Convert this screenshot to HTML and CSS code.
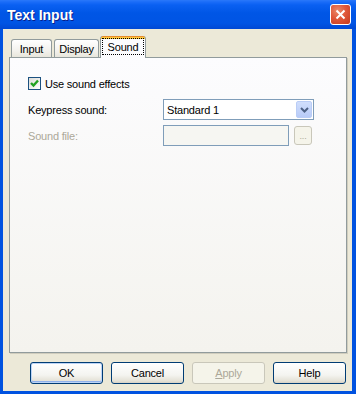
FILE: index.html
```html
<!DOCTYPE html>
<html lang="en">
<head>
  <meta charset="UTF-8">
  <title>Text Input</title>
  <link rel="stylesheet" href="styles.css">
</head>
<body>

<div class="window">
  <div class="titlebar">
    <span class="title">Text Input</span>
    <div class="close-btn">
      <svg width="11" height="11" viewBox="0 0 11 11"><path d="M1.5 1.5 L9.5 9.5 M9.5 1.5 L1.5 9.5" stroke="#fff" stroke-width="2" fill="none"/></svg>
    </div>
  </div>

  <div class="client">
    <div class="tabs">
      <div class="tab tab-input">Input</div>
      <div class="tab tab-display">Display</div>
      <div class="tab tab-active"><span class="focus">Sound</span></div>
    </div>

    <div class="panel">
      <div class="check-row">
        <span class="checkbox">
          <svg width="11" height="11" viewBox="0 0 11 11"><path d="M2 5 L4.5 7.5 L9 2.5" stroke="#21a121" stroke-width="2.4" fill="none"/></svg>
        </span>
        <span>Use sound effects</span>
      </div>

      <div class="row">
        <span class="label">Keypress sound:</span>
        <div class="combo">
          <span class="combo-text">Standard 1</span>
          <span class="combo-btn">
            <svg width="9" height="6" viewBox="0 0 9 6"><path d="M1 1 L4.5 4.5 L8 1" stroke="#4d6185" stroke-width="2" fill="none"/></svg>
          </span>
        </div>
      </div>

      <div class="row row-disabled">
        <span class="label">Sound file:</span>
        <div class="field"></div>
        <div class="browse-btn">...</div>
      </div>
    </div>

    <div class="buttons">
      <div class="btn btn-default">OK</div>
      <div class="btn">Cancel</div>
      <div class="btn btn-disabled"><u>A</u>pply</div>
      <div class="btn">Help</div>
    </div>
  </div>
</div>

</body>
</html>
```

FILE: styles.css
```css
/* Global Styles */
body {
  margin: 0;
  font-family: 'Liberation Sans', Arial, sans-serif;
  font-size: 11px;
  letter-spacing: -0.2px;
  color: #000;
}

.window {
  width: 356px;
  height: 394px;
  display: flex;
  flex-direction: column;
  background: #0052e0;
}

/* Title bar */
.titlebar {
  height: 29px;
  flex: none;
  display: flex;
  align-items: center;
  justify-content: space-between;
  padding: 0 5px 0 7px;
  box-sizing: border-box;
  background: linear-gradient(#2a78fa 0, #1a6cf8 2px, #0a60f2 5px, #0056e6 45%, #0054e4 80%, #0048d4 100%);
}

.title {
  color: #fff;
  font-weight: bold;
  font-size: 14px;
  letter-spacing: 0;
  text-shadow: 1px 1px 0 #0a1e8a;
}

.close-btn {
  width: 21px;
  height: 21px;
  box-sizing: border-box;
  border: 1px solid #fff;
  border-radius: 3px;
  background: radial-gradient(circle at 35% 30%, #ea8a6a 0, #e0583a 45%, #c4381c 100%);
  display: flex;
  align-items: center;
  justify-content: center;
}

/* Client area */
.client {
  flex: 1;
  margin: 0 4px 3px 3px;
  background: #ece9d8;
  padding: 7px 5px 0 6px;
  display: flex;
  flex-direction: column;
}

/* Tabs */
.tabs {
  height: 21px;
  display: flex;
  align-items: flex-end;
  padding-left: 2px;
  flex: none;
}

.tab {
  height: 18px;
  box-sizing: border-box;
  border: 1px solid #919b9c;
  border-bottom: none;
  border-radius: 3px 3px 0 0;
  background: linear-gradient(#ffffff, #f3f2ee 60%, #e8e6dc);
  display: flex;
  align-items: center;
  justify-content: center;
  padding-top: 1px;
}

.tab-input {
  width: 41px;
  margin-right: 2px;
}

.tab-display {
  width: 45px;
  margin-right: 1px;
}

.tab-active {
  width: 46px;
  height: 22px;
  margin-bottom: -1px;
  position: relative;
  z-index: 2;
  border-top: none;
  padding: 2px 1px 0;
  align-items: flex-start;
  background: linear-gradient(#e68b2c 0, #e68b2c 1px, #ffc73c 1px, #ffc73c 3px, #fcfcfe 3px);
}

.focus {
  display: flex;
  align-items: center;
  justify-content: center;
  width: 100%;
  height: 17px;
  box-sizing: border-box;
  border: 1px dotted #000;
}

/* Tab panel */
.panel {
  height: 296px;
  flex: none;
  box-sizing: border-box;
  border: 1px solid #919b9c;
  background: linear-gradient(#fcfcfe, #f4f3ee);
  box-shadow: 1px 1px 0 #d0cdbe;
  padding: 19px 0 0 18px;
}

.check-row {
  display: flex;
  align-items: center;
  height: 13px;
  gap: 4px;
}

.checkbox {
  width: 13px;
  height: 13px;
  box-sizing: border-box;
  border: 1px solid #1c5180;
  background: linear-gradient(135deg, #dcdcd7, #ffffff);
  display: flex;
  align-items: center;
  justify-content: center;
}

.row {
  display: flex;
  align-items: center;
  margin-top: 9px;
}

.row-disabled {
  margin-top: 5px;
  color: #aca899;
}

.label {
  width: 135px;
  flex: none;
}

.combo {
  width: 151px;
  height: 21px;
  box-sizing: border-box;
  border: 1px solid #7f9db9;
  background: #fff;
  display: flex;
  align-items: center;
  justify-content: space-between;
  padding: 0 1px 0 3px;
}

.combo-btn {
  width: 16px;
  height: 17px;
  box-sizing: border-box;
  border: 1px solid #bacdf6;
  border-radius: 2px;
  background: linear-gradient(#d0defc, #b8cbf8);
  display: flex;
  align-items: center;
  justify-content: center;
}

.field {
  width: 126px;
  height: 21px;
  box-sizing: border-box;
  border: 1px solid #7f9db9;
  background: #f6f6f2;
}

.browse-btn {
  width: 18px;
  height: 19px;
  margin-left: 5px;
  box-sizing: border-box;
  border: 1px solid #c9c7ba;
  border-radius: 3px;
  background: #f5f4ea;
  color: #aca899;
  display: flex;
  align-items: center;
  justify-content: center;
  font-size: 9px;
}

/* Dialog buttons */
.buttons {
  display: flex;
  justify-content: flex-end;
  gap: 8px;
  margin-top: 9px;
  padding-right: 1px;
}

.btn {
  width: 73px;
  height: 22px;
  box-sizing: border-box;
  border: 1px solid #003c74;
  border-radius: 3px;
  background: linear-gradient(#ffffff, #f4f4f0 60%, #e4e1d6 90%, #d6d0c5);
  display: flex;
  align-items: center;
  justify-content: center;
}

.btn-default {
  box-shadow: inset 0 0 0 1px #bcd4f6, inset 0 -1px 0 1px #8fb0ea;
}

.btn-disabled {
  border-color: #c9c7ba;
  background: #f5f4ea;
  color: #aca899;
}
```
